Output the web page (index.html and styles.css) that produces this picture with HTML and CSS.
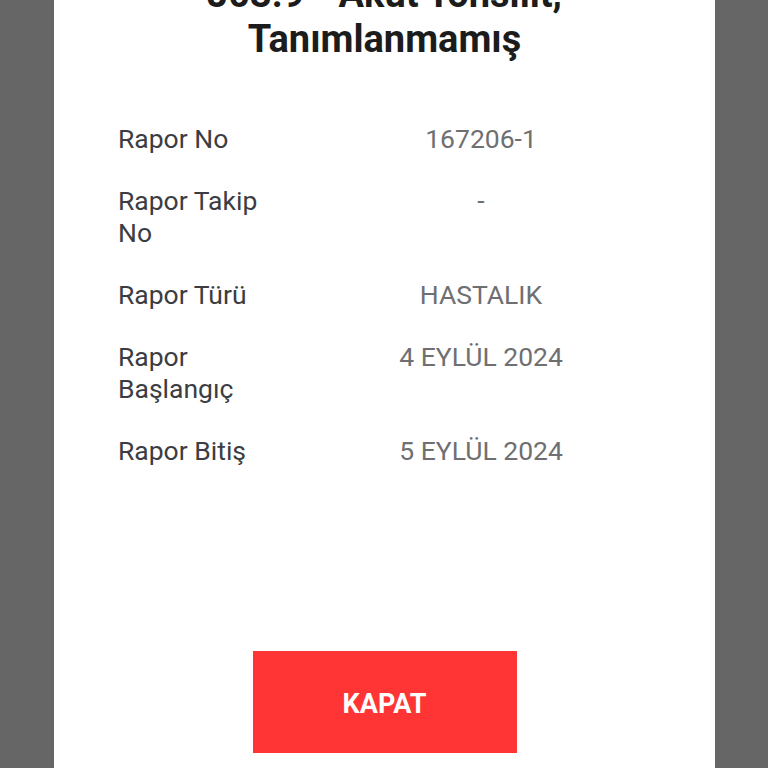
FILE: index.html
```html
<!DOCTYPE html>
<html lang="tr">
<head>
    <meta charset="UTF-8">
    <meta name="viewport" content="width=device-width, initial-scale=1.0">
    <title>Rapor Detayı</title>
    <link rel="stylesheet" href="styles.css">
</head>
<body>
    <div class="sheet">
        <h1 class="title">J03.9 - Akut Tonsilit, Tanımlanmamış</h1>
        <div class="details">
            <div class="label">Rapor No</div>
            <div class="value">167206-1</div>

            <div class="label">Rapor Takip No</div>
            <div class="value">-</div>

            <div class="label">Rapor Türü</div>
            <div class="value">HASTALIK</div>

            <div class="label">Rapor Başlangıç</div>
            <div class="value">4 EYLÜL 2024</div>

            <div class="label">Rapor Bitiş</div>
            <div class="value">5 EYLÜL 2024</div>
        </div>
        <button class="close-btn">KAPAT</button>
    </div>
</body>
</html>
```

FILE: styles.css
```css
body {
    margin: 0;
    background-color: #666;
    font-family: Roboto, "Noto Sans", Arial, sans-serif;
    height: 768px;
    overflow: hidden;
}

.sheet {
    display: flex;
    flex-direction: column;
    align-items: center;
    background-color: #fff;
    width: 661px;
    height: 768px;
    margin-left: 54px;
    box-sizing: border-box;
    padding-bottom: 15px;
}

/* first line of the title is scrolled out above the top */
.title {
    margin: -28px 0 0;
    width: 440px;
    font-size: 38px;
    line-height: 45px;
    font-weight: 700;
    color: #1c1c1c;
    text-align: center;
}

.details {
    display: grid;
    grid-template-columns: 160px 338px;
    column-gap: 34px;
    row-gap: 30px;
    align-self: stretch;
    margin: 61px 64px 0;
    font-size: 26.5px;
    line-height: 32px;
}

.label {
    color: #3b3d42;
}

.value {
    color: #6f6f72;
    text-align: center;
}

.close-btn {
    margin-top: auto;
    width: 264px;
    height: 102px;
    padding-top: 4px;
    border: none;
    background-color: #ff3434;
    color: #fff;
    font-family: inherit;
    font-size: 27px;
    font-weight: 700;
    cursor: pointer;
}
```
